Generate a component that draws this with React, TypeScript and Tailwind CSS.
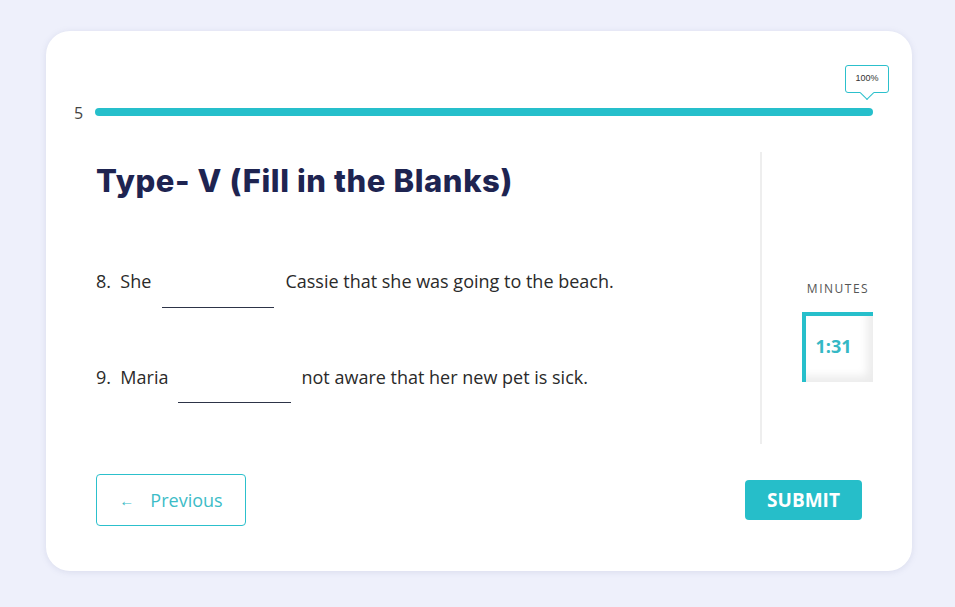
export default function App() {
  return (
    <div className="w-[955px] h-[607px] bg-[#eef0fb] pt-[31px] pl-[46px] font-['Open_Sans',sans-serif]">
      <div className="w-[866px] h-[540px] bg-white rounded-[24px] shadow-[0_1px_6px_rgba(120,125,170,0.18)] pt-[34px]">
        {/* progress */}
        <div className="relative h-[70px] pl-[28px] pr-[39px] flex items-end pb-[19px] gap-[12px]">
          <span className="text-[16px] text-[#444] leading-none pb-[1px] -mb-[6px]">5</span>
          <div className="flex-1 h-[8px] rounded-full bg-[#26bfcb]"></div>
          <div className="absolute right-[23px] top-0 w-[44px] h-[28px] border-[1.5px] border-[#2cc0cc] rounded-[3px] bg-white flex items-center justify-center">
            <span className="text-[9px] text-[#333] font-['Liberation_Sans',sans-serif]">100%</span>
            <div className="absolute -bottom-[6px] left-1/2 -translate-x-1/2 w-[10px] h-[10px] bg-white border-r-[1.5px] border-b-[1.5px] border-[#2cc0cc] rotate-45"></div>
          </div>
        </div>

        <div className="flex h-[292px] mt-[17px]">
          <div className="w-[714px] pl-[50px] pt-[8px]">
            <h1 className="text-[31px] font-extrabold text-[#1e2451] tracking-[0.6px] font-['Inter',sans-serif] leading-[42px]">
              Type- V (Fill in the Blanks)
            </h1>
            <div className="mt-[64px] text-[18px] text-[#2a2a2a] flex items-start h-[52px]">
              <span className="leading-[30px]">8.&nbsp; She</span>
              <span className="inline-block w-[112px] h-[30px] border-b border-[#2d3448] ml-[11px] mr-[11px] mt-[12px]"></span>
              <span className="leading-[30px]">Cassie that she was going to the beach.</span>
            </div>
            <div className="mt-[44px] text-[18px] text-[#2a2a2a] flex items-start h-[52px]">
              <span className="leading-[30px]">9.&nbsp; Maria</span>
              <span className="inline-block w-[113px] h-[30px] border-b border-[#2d3448] ml-[10px] mr-[10px] mt-[11px]"></span>
              <span className="leading-[30px]">not aware that her new pet is sick.</span>
            </div>
          </div>
          <div className="border-l-2 border-[#eeeeee] flex-1 flex flex-col items-center pt-[128px]">
            <div className="text-[12px] tracking-[1.5px] text-[#555] pl-[2px]">MINUTES</div>
            <div className="mt-[14px] w-[71px] h-[70px] border-l-4 border-t-4 border-l-[#26bfcb] border-t-[#26bfcb] bg-white shadow-[inset_-6px_-6px_8px_rgba(0,0,0,0.08)] flex items-center pl-[10px] pb-[6px]">
              <span className="text-[18px] font-bold text-[#35b8c5]">1:31</span>
            </div>
          </div>
        </div>

        <div className="flex items-center justify-between px-[50px] mt-[30px]">
          <button className="w-[150px] h-[52px] border border-[#2cc0cc] rounded-[4px] flex items-center justify-center gap-[16px] text-[#3cbcc7] text-[18px]">
            <span className="text-[15px] font-bold">←</span>
            <span>Previous</span>
          </button>
          <button className="w-[117px] h-[40px] bg-[#26bec9] rounded-[4px] text-white font-bold text-[19px]">
            SUBMIT
          </button>
        </div>
      </div>
    </div>
  )
}
